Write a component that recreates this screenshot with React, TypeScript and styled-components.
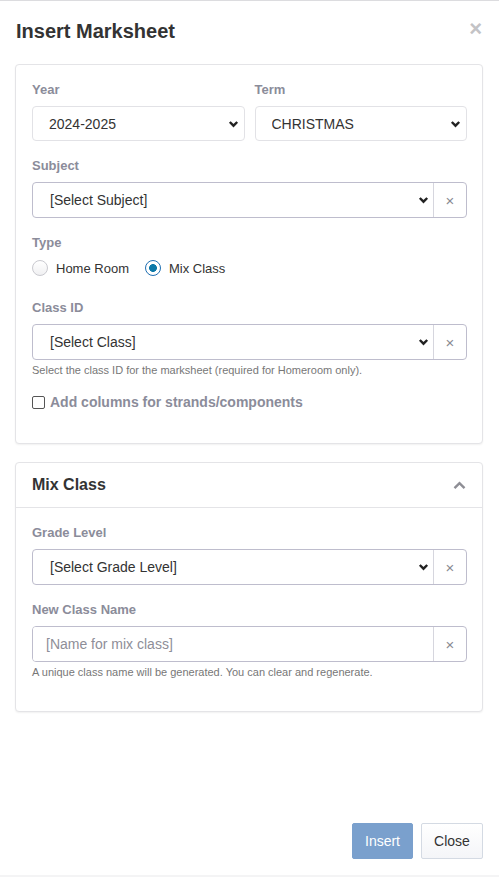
import styled, { createGlobalStyle } from "styled-components";

const GlobalStyle = createGlobalStyle`
  html, body {
    margin: 0;
    padding: 0;
    background: #f4f4f5;
    font-family: "Liberation Sans", Arial, sans-serif;
    color: #333;
  }
  * { box-sizing: border-box; }
`;

const ChevronDown = () => (
  <svg width="11" height="8" viewBox="0 0 11 8">
    <polyline points="1.8,2 5.5,5.7 9.2,2" fill="none" stroke="#222" strokeWidth="2.4" />
  </svg>
);

const ChevronUp = () => (
  <svg width="13" height="9" viewBox="0 0 13 9">
    <polyline points="1.5,7.2 6.5,2.2 11.5,7.2" fill="none" stroke="#8e8e95" strokeWidth="2.4" />
  </svg>
);

type SelectProps = { value: string };

const PlainSelect = ({ value }: SelectProps) => (
  <SelectBox>
    <NativeSelect defaultValue={value}>
      <option>{value}</option>
    </NativeSelect>
    <ChevronDown />
  </SelectBox>
);

const ClearableSelect = ({ value }: SelectProps) => (
  <InputGroup>
    <GroupSelect>
      <NativeSelect defaultValue={value} $indent={17}>
        <option>{value}</option>
      </NativeSelect>
      <ChevronDown />
    </GroupSelect>
    <Addon>×</Addon>
  </InputGroup>
);

const App = () => {
  return (
    <>
      <GlobalStyle />
      <Modal>
        <Header>
          <Title>Insert Marksheet</Title>
          <CloseX>×</CloseX>
        </Header>

        <Body>
          <Card>
            <CardBody $bottom={32}>
              <Row>
                <Field>
                  <Label>Year</Label>
                  <PlainSelect value="2024-2025" />
                </Field>
                <Field>
                  <Label>Term</Label>
                  <PlainSelect value="CHRISTMAS" />
                </Field>
              </Row>

              <Field>
                <Label>Subject</Label>
                <ClearableSelect value="[Select Subject]" />
              </Field>

              <Field>
                <Label>Type</Label>
                <RadioRow>
                  <RadioItem>
                    <Radio $checked={false} />
                    Home Room
                  </RadioItem>
                  <RadioItem>
                    <Radio $checked />
                    Mix Class
                  </RadioItem>
                </RadioRow>
              </Field>

              <Field>
                <Label>Class ID</Label>
                <ClearableSelect value="[Select Class]" />
                <Help>Select the class ID for the marksheet (required for Homeroom only).</Help>
              </Field>

              <Field>
                <CheckRow>
                  <CheckBox />
                  Add columns for strands/components
                </CheckRow>
              </Field>
            </CardBody>
          </Card>

          <Card>
            <CardHeader>
              <CardTitle>Mix Class</CardTitle>
              <ChevronUp />
            </CardHeader>
            <CardBody $bottom={32}>
              <Field>
                <Label>Grade Level</Label>
                <ClearableSelect value="[Select Grade Level]" />
              </Field>
              <Field>
                <Label>New Class Name</Label>
                <InputGroup>
                  <TextInput placeholder="[Name for mix class]" />
                  <Addon>×</Addon>
                </InputGroup>
                <Help>A unique class name will be generated. You can clear and regenerate.</Help>
              </Field>
            </CardBody>
          </Card>
        </Body>

        <Footer>
          <PrimaryButton>Insert</PrimaryButton>
          <DefaultButton>Close</DefaultButton>
        </Footer>
      </Modal>
    </>
  );
};

const Modal = styled.div`
  height: 875px;
  background: #fff;
  border-top: 1px solid #dcdcdf;
  display: flex;
  flex-direction: column;
`;

const Header = styled.div`
  display: flex;
  align-items: flex-start;
  justify-content: space-between;
  padding: 18px 16px 0 16px;
  height: 63px;
`;

const Title = styled.h4`
  margin: 0;
  font-size: 20px;
  line-height: 24px;
  font-weight: 700;
  color: #333;
`;

const CloseX = styled.span`
  font-size: 22px;
  line-height: 18px;
  font-weight: 700;
  color: #c3c3c6;
  margin-top: 1px;
  margin-right: 1px;
`;

const Body = styled.div`
  display: flex;
  flex-direction: column;
  gap: 18px;
  padding: 0 16px 0 15px;
`;

const Card = styled.div`
  border: 1px solid #e4e4e7;
  border-radius: 4px;
  background: #fff;
  box-shadow: 0 1px 2px rgba(0, 0, 0, 0.06);
`;

const CardHeader = styled.div`
  display: flex;
  align-items: center;
  justify-content: space-between;
  padding: 12px 16px;
  height: 45px;
  border-bottom: 1px solid #e4e4e7;
`;

const CardTitle = styled.div`
  font-size: 16px;
  font-weight: 700;
  color: #333;
`;

const CardBody = styled.div<{ $bottom: number }>`
  display: flex;
  flex-direction: column;
  gap: 16px;
  padding: 16px 15px ${({ $bottom }) => $bottom}px 16px;
`;

const Row = styled.div`
  display: grid;
  grid-template-columns: 1fr 1fr;
  gap: 10px;
`;

const Field = styled.div`
  display: flex;
  flex-direction: column;
`;

const Label = styled.label`
  font-size: 13px;
  line-height: 18px;
  font-weight: 700;
  color: #8b8c9a;
  margin-bottom: 7px;
`;

const SelectBox = styled.div`
  display: flex;
  align-items: center;
  height: 35px;
  border: 1px solid #e2e2e6;
  border-radius: 4px;
  padding: 0 5px 0 0;
  background: #fff;
`;

const NativeSelect = styled.select<{ $indent?: number }>`
  flex: 1;
  min-width: 0;
  appearance: none;
  border: none;
  outline: none;
  background: transparent;
  font-family: "Liberation Sans", Arial, sans-serif;
  font-size: 14px;
  color: #333;
  padding: 0 0 0 ${({ $indent }) => $indent ?? 16}px;
  height: 100%;
`;

const InputGroup = styled.div`
  display: flex;
  height: 36px;
  border: 1px solid #bebdcd;
  border-radius: 4px;
  overflow: hidden;
`;

const GroupSelect = styled.div`
  flex: 1;
  display: flex;
  align-items: center;
  padding-right: 4px;
`;

const Addon = styled.span`
  width: 33px;
  display: flex;
  align-items: center;
  justify-content: center;
  border-left: 1px solid #d6d6de;
  color: #8a8a92;
  font-size: 15px;
`;

const TextInput = styled.input`
  flex: 1;
  border: none;
  outline: none;
  font-family: "Liberation Sans", Arial, sans-serif;
  font-size: 14px;
  padding: 0 0 0 13px;
  color: #333;

  &::placeholder {
    color: #8e8e98;
  }
`;

const Help = styled.div`
  font-size: 11px;
  line-height: 14px;
  color: #777;
  margin-top: 3px;
`;

const RadioRow = styled.div`
  display: flex;
  align-items: flex-start;
  gap: 16px;
  height: 24px;
`;

const RadioItem = styled.label`
  display: flex;
  align-items: center;
  gap: 8px;
  height: 18px;
  font-size: 13px;
  color: #333;
`;

const Radio = styled.span<{ $checked: boolean }>`
  width: 16px;
  height: 16px;
  border-radius: 50%;
  border: 1px solid ${({ $checked }) => ($checked ? "#1f6fb2" : "#c9c9cf")};
  background: ${({ $checked }) =>
    $checked ? "radial-gradient(circle, #0b78a8 0 3.6px, #fff 4.2px)" : "linear-gradient(#fff, #f0f0f2)"};
`;

const CheckRow = styled.label`
  display: flex;
  align-items: center;
  gap: 5px;
  font-size: 14px;
  line-height: 18px;
  font-weight: 700;
  color: #8b8c9a;
`;

const CheckBox = styled.span`
  width: 13px;
  height: 13px;
  border: 1px solid #555;
  border-radius: 2px;
  background: #fff;
`;

const Footer = styled.div`
  margin-top: auto;
  display: flex;
  justify-content: flex-end;
  gap: 8px;
  padding: 0 16px 16px 16px;
`;

const ButtonBase = styled.button`
  height: 36px;
  padding: 0 12px;
  font-family: "Liberation Sans", Arial, sans-serif;
  font-size: 14px;
  border-radius: 2px;
`;

const PrimaryButton = styled(ButtonBase)`
  width: 61px;
  background: #7aa0cd;
  border: 1px solid #7aa0cd;
  color: #fff;
`;

const DefaultButton = styled(ButtonBase)`
  width: 62px;
  background: linear-gradient(#fff, #f4f5f8);
  border: 1px solid #d4dae3;
  color: #333;
`;

export default App;
